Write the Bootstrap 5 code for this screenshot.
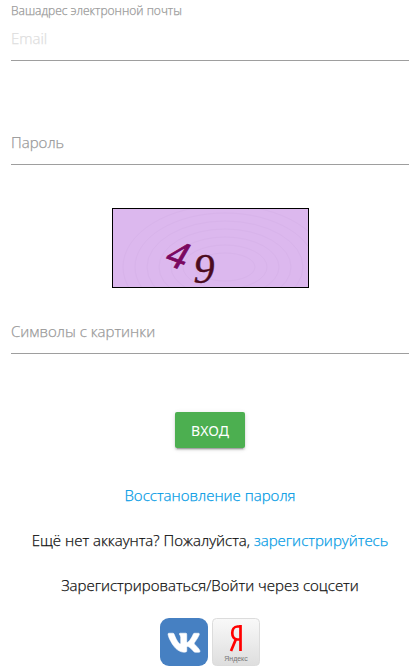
<!DOCTYPE html>
<html lang="ru">
<head>
<meta charset="utf-8">
<meta name="viewport" content="width=device-width, initial-scale=1">
<title>Вход</title>
<link href="https://cdn.jsdelivr.net/npm/bootstrap@5.3.0/dist/css/bootstrap.min.css" rel="stylesheet">
<style>
body { font-family: "Open Sans", "Noto Sans", sans-serif; font-size: 15px; font-weight: 300; line-height: 23px; color: #111; background: #fff; -webkit-text-stroke: .25px; }
.login-form { padding: 6px 11px 0; }
.field-label { font-size: 12px; line-height: 10px; color: #999; }
.line-input { height: 45px; padding: 0; border: 0; border-bottom: 1px solid #9e9e9e; border-radius: 0; background: transparent; font-size: 15px; font-weight: 300; }
.line-input:focus { box-shadow: none; border-color: #26a69a; background: transparent; }
.line-input::placeholder { color: #dedede; opacity: 1; }
.overlaid > * { grid-area: 1 / 1; }
.overlaid label { color: #999; pointer-events: none; }
.overlaid:has(input:not(:placeholder-shown)) label { visibility: hidden; }
.password-row { margin-top: 59px; }
.captcha-row { margin: 43px 0 21px; }
.captcha { border: 1px solid #000; background: #dcb8ee; -webkit-text-stroke: 0; }
.submit-row { margin-top: 58px; }
.btn-enter { --bs-btn-color: #fff; --bs-btn-bg: #4caf50; --bs-btn-hover-color: #fff; --bs-btn-hover-bg: #5cbb60; height: 36px; padding: 0 16px; border: 0; border-radius: 2px; font-family: "Noto Sans", "Open Sans", sans-serif; font-size: 14px; -webkit-text-stroke: 0; box-shadow: 0 2px 2px rgba(0,0,0,.14), 0 1px 5px rgba(0,0,0,.12), 0 3px 1px -2px rgba(0,0,0,.2); }
.form-links { margin-top: 36px; gap: 22px; }
.form-links a { color: #039be5; }
.social { gap: 4px; margin-top: 21px; -webkit-text-stroke: 0; }
</style>
<script src="https://cdn.jsdelivr.net/npm/bootstrap@5.3.0/dist/js/bootstrap.bundle.min.js"></script>
</head>
<body>
<main>
<form class="login-form">
  <div>
    <label for="email" class="field-label d-block">Вашадрес электронной почты</label>
    <input id="email" type="email" class="form-control line-input" placeholder="Email">
  </div>
  <div class="password-row overlaid d-grid align-items-center">
    <input id="password" type="password" class="form-control line-input" placeholder=" ">
    <label for="password">Пароль</label>
  </div>
  <div class="captcha-row d-flex justify-content-center">
    <svg class="captcha" width="197" height="80" viewBox="0 0 195 78" role="img" aria-label="Картинка с символами">
      <g fill="none" stroke="#cfaae3" stroke-width="1" opacity=".3">
        <ellipse cx="112" cy="58" rx="30" ry="14"/><ellipse cx="112" cy="58" rx="42" ry="22"/><ellipse cx="112" cy="58" rx="54" ry="30"/><ellipse cx="112" cy="58" rx="66" ry="38"/><ellipse cx="112" cy="58" rx="78" ry="46"/><ellipse cx="112" cy="58" rx="90" ry="54"/><ellipse cx="112" cy="58" rx="102" ry="62"/>
      </g>
      <g font-family="Liberation Serif, serif" font-style="italic" text-anchor="middle">
        <text font-size="40" fill="#7b0860" stroke="#7b0860" stroke-width=".8" transform="translate(65 46) rotate(20)" y="13">4</text>
        <text x="91" y="74" font-size="42" fill="#4c0b20" stroke="#4c0b20" stroke-width=".4">9</text>
      </g>
    </svg>
  </div>
  <div class="overlaid d-grid align-items-center">
    <input id="symbols" type="text" class="form-control line-input" placeholder=" ">
    <label for="symbols">Символы с картинки</label>
  </div>
  <div class="submit-row d-flex justify-content-center">
    <button type="submit" class="btn btn-enter">ВХОД</button>
  </div>
</form>
<div class="form-links d-flex flex-column text-center">
  <div><a href="#" class="text-decoration-none">Восстановление пароля</a></div>
  <div>Ещё нет аккаунта? Пожалуйста, <a href="#" class="text-decoration-none">зарегистрируйтесь</a></div>
  <div>Зарегистрироваться/Войти через соцсети</div>
</div>
<div class="social d-flex justify-content-center">
  <a href="#" class="d-flex" aria-label="ВКонтакте">
    <svg width="48" height="48" viewBox="0 0 24 24"><rect width="24" height="24" rx="4.5" fill="#4680c2"/><path fill="#fff" stroke="#fff" stroke-width=".3" d="M19.376 17.123h-1.744c-.66 0-.864-.525-2.05-1.727-1.033-1-1.49-1.135-1.744-1.135-.356 0-.458.102-.458.593v1.575c0 .424-.135.678-1.253.678-1.846 0-3.896-1.118-5.335-3.202C4.624 10.857 4.03 8.57 4.03 8.096c0-.254.102-.491.593-.491h1.744c.44 0 .61.203.78.677.863 2.49 2.303 4.675 2.896 4.675.22 0 .322-.102.322-.66V9.721c-.068-1.186-.695-1.287-.695-1.71 0-.204.17-.407.44-.407h2.744c.373 0 .508.203.508.643v3.473c0 .372.17.508.271.508.22 0 .407-.136.813-.542 1.254-1.406 2.151-3.574 2.151-3.574.119-.254.322-.491.763-.491h1.744c.525 0 .644.27.525.643-.22 1.017-2.354 4.031-2.354 4.031-.186.305-.254.44 0 .78.186.254.796.779 1.203 1.253.745.847 1.32 1.558 1.473 2.05.17.49-.085.744-.576.744z"/></svg>
  </a>
  <a href="#" class="d-flex" aria-label="Яндекс">
    <svg width="48" height="48" viewBox="0 0 48 48">
      <defs><linearGradient id="silver" x2="0" y2="1"><stop stop-color="#f9f9f9"/><stop offset="1" stop-color="#dedede"/></linearGradient></defs>
      <rect x=".5" y=".5" width="47" height="47" rx="4" fill="url(#silver)" stroke="#dcdcdc"/>
      <path d="M28.500 7v26M28.500 8.500h-3c-7 0-7 13 0 13h3M24 21l-5 12" fill="none" stroke="#f00" stroke-width="2.700"/>
      <text x="24" y="43" text-anchor="middle" font-family="Liberation Sans, sans-serif" font-size="7" fill="#777">Яндекс</text>
    </svg>
  </a>
</div>
</main>
</body>
</html>
